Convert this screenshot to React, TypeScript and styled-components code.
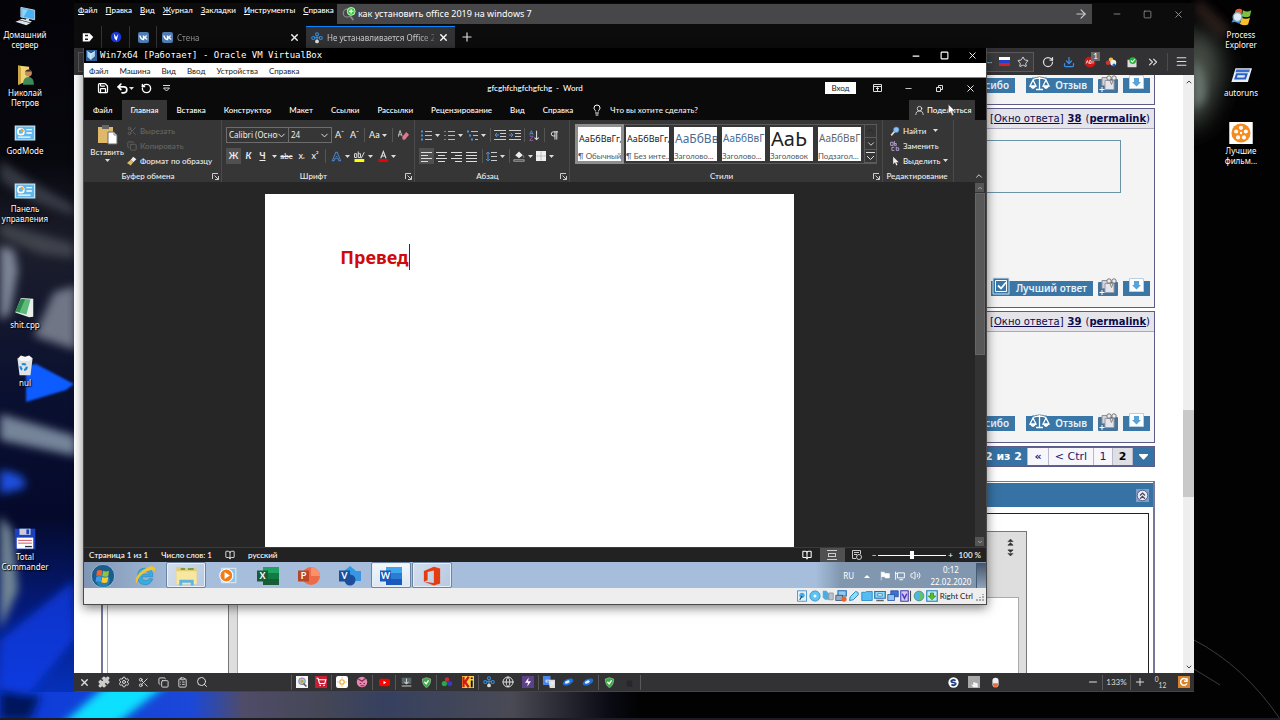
import React from "react";
import styled, { createGlobalStyle, css } from "styled-components";
import {
  Save, Undo2, RotateCcw, X, Minus, Plus, Square, Copy, Scissors, Search, Settings, Puzzle,
  ClipboardList, ChevronDown, ChevronUp, ChevronsRight, Menu, Star, RotateCw, Download, ArrowRight,
  Lightbulb, UserRound, Pilcrow, Volume2, BookOpen, Globe,
} from "lucide-react";

const compact = 'Lato, "Noto Sans", sans-serif';
const ui = '"Noto Sans", "Open Sans", sans-serif';
const verdana = '"DejaVu Sans", Verdana, sans-serif';

const GlobalStyle = createGlobalStyle`
  * { box-sizing: border-box; }
  html, body { margin: 0; }
  body { background: #000; font: 8px/10px ${compact}; color: #fff; }
  button, input, select, textarea { font: inherit; color: inherit; background: none; border: 0; margin: 0; padding: 0; }
  a { color: inherit; text-decoration: none; }
  svg { display: block; flex: none; }
`;

/* ---------- Desktop ---------- */

const Desktop = styled.div`
  position: relative;
  display: grid;
  grid-template-columns: 74px minmax(0, 1fr) 86px;
  min-height: 100vh;
  overflow: hidden;
`;
const WallpaperSvg = styled.svg`
  position: absolute;
  inset: 0;
  width: 100%;
  height: 100%;
`;
const IconColumn = styled.nav<{ $indent?: number }>`
  position: relative;
  display: grid;
  grid-auto-rows: 58px;
  grid-template-columns: 50px;
  padding-left: ${(p) => p.$indent ?? 0}px;
  padding-top: 6px;
  align-content: start;
`;
const Shortcut = styled.a<{ $row: number }>`
  grid-row: ${(p) => p.$row};
  display: flex;
  flex-direction: column;
  align-items: center;
  gap: 2px;
  text-align: center;
  font-family: ${ui};
  white-space: pre;
  text-shadow: 1px 1px 1px #000, 0 0 2px #000;
`;

/* ---------- Host browser ---------- */

const Browser = styled.main`
  position: relative;
  display: flex;
  flex-direction: column;
  min-width: 0;
  margin: 3px 0 28px;
  background: #0c0c0d;
`;
const Row = styled.div<{ $gap?: number }>`
  display: flex;
  align-items: center;
  gap: ${(p) => p.$gap ?? 0}px;
`;
const BrowserTitle = styled(Row)`
  height: 22px;
  padding-left: 4px;
`;
const HostMenu = styled.nav`
  display: flex;
  gap: 8px;
  width: 259px;
  padding-bottom: 9px;
  font-weight: 500;
  white-space: nowrap;
  a::first-letter { text-decoration: underline; }
`;
const SearchBox = styled.label`
  display: flex;
  align-items: center;
  gap: 2px;
  flex: 1;
  height: 20px;
  margin-right: 9px;
  padding: 0 4px 0 5px;
  background: #474749;
  input { flex: 1; min-width: 0; font: 9px/12px ${ui}; outline: 0; }
`;
const Controls = styled.div<{ $w: number }>`
  display: flex;
  align-items: center;
  button {
    width: ${(p) => p.$w}px;
    height: 14px;
    display: flex;
    align-items: center;
    justify-content: center;
  }
`;
const TabStrip = styled(Row)`
  height: 23px;
  align-items: stretch;
  padding-top: 1px;
`;
const PinTab = styled.button`
  display: flex;
  align-items: center;
  justify-content: center;
  width: 28px;
  border-right: 1px solid #333;
  &:nth-child(3) { width: 27px; }
`;
const Tab = styled.div<{ $active?: boolean }>`
  display: flex;
  align-items: center;
  gap: 4px;
  width: 149px;
  padding: 0 6px 0 5px;
  color: ${(p) => (p.$active ? "#c8c8c8" : "#8d8d8d")};
  font-family: ${ui};
  background: ${(p) => (p.$active ? "#323234" : "transparent")};
  border-top: 1px solid ${(p) => (p.$active ? "#0a84ff" : "transparent")};
  span {
    flex: 1;
    overflow: hidden;
    white-space: nowrap;
    mask-image: linear-gradient(90deg, #000 85%, rgba(0, 0, 0, 0.3));
  }
`;
const NavBar = styled(Row)`
  height: 27px;
  justify-content: flex-end;
  background: #323234;
  color: #ddd;
`;
const UrlBox = styled.div`
  display: flex;
  align-items: center;
  justify-content: flex-end;
  flex: 1;
  height: 20px;
  margin-left: 4px;
  padding-right: 4px;
  gap: 7px;
  border: 1px solid #59595b;
  background: #3b3b3d;
`;
const NavIcons = styled.div`
  display: flex;
  padding-left: 3px;
  button {
    position: relative;
    display: flex;
    align-items: center;
    justify-content: center;
    width: 21px;
    height: 18px;
  }
  button:last-child {
    width: 27px;
    margin-left: 4px;
    border-left: 1px solid #4c4c4e;
  }
`;
const Badge = styled.span`
  position: absolute;
  top: -1px;
  right: 0;
  width: 9px;
  line-height: 9px;
  background: #6a6a6c;
  color: #fff;
`;
const PageView = styled.div`
  display: flex;
  flex: 1;
  min-height: 0;
  background: #fff;
`;
const PageScroll = styled.div`
  display: flex;
  flex-direction: column;
  justify-content: space-between;
  align-items: center;
  position: relative;
  width: 11px;
  background: #eee;
  color: #444;
  padding: 3px 0 2px;
`;
const PageThumb = styled.div`
  position: absolute;
  top: 56%;
  left: 0;
  right: 0;
  height: 87px;
  background: #c9c9c9;
`;

/* ---------- Forum page ---------- */

const Forum = styled.div`
  display: flex;
  flex-direction: column;
  flex: 1;
  min-width: 0;
  margin: 0 28px 0 27px;
  font: 10px/12px ${verdana};
  color: #0b0b4d;
`;
const Post = styled.article<{ $h: number; $partial?: boolean }>`
  display: flex;
  flex-direction: column;
  min-height: ${(p) => p.$h}px;
  margin-bottom: 3px;
  background: #f4f4f4;
  border: 1px solid #5c5c88;
  border-top-width: ${(p) => (p.$partial ? 0 : 1)}px;
`;
const PostHead = styled.header`
  display: flex;
  justify-content: flex-end;
  gap: 4px;
  height: 20px;
  padding: 4px 4px 3px;
  background: #e4e4ea;
  border-bottom: 1px solid #a9a9b9;
  a { text-decoration: underline; }
`;
const Quote = styled.blockquote`
  height: 53px;
  margin: 11px 33px 0 40px;
  border: 1px solid #6a93a8;
`;
const PostFoot = styled.footer`
  display: flex;
  align-items: flex-end;
  justify-content: flex-end;
  gap: 5px;
  margin-top: auto;
  padding: 0 4px 11px;
`;
const ForumButton = styled.button<{ $w: number; $apart?: boolean }>`
  display: flex;
  align-items: flex-end;
  justify-content: flex-end;
  gap: 5px;
  width: ${(p) => p.$w}px;
  height: 15px;
  margin-right: ${(p) => (p.$apart ? 6 : 0)}px;
  padding: ${(p) => (p.$w > 30 ? "0 6px 0 0" : "0 6px 4px 0")};
  background: #3a76a6;
  color: #e8f2fa;
  font: 600 10px/15px ${ui};
  white-space: nowrap;
`;
const Pager = styled.nav`
  display: flex;
  justify-content: flex-end;
  height: 21px;
  padding: 1px;
  border: 1px solid #5c5c88;
  background: #3672a3;
  font-size: 11px;
  line-height: 17px;
`;
const PagerCell = styled.a<{ $w: number; $tone?: "blue" | "grey" }>`
  display: flex;
  justify-content: ${(p) => (p.$w > 100 ? "flex-end" : "center")};
  align-items: center;
  width: ${(p) => p.$w}px;
  padding-right: ${(p) => (p.$w > 100 ? 5 : 0)}px;
  border-left: 1px solid #b9b9cd;
  background: ${(p) => (p.$tone === "blue" ? "#3672a3" : p.$tone === "grey" ? "#e0e0e4" : "#f6f6fb")};
  color: ${(p) => (p.$tone === "blue" ? "#fff" : p.$tone === "grey" ? "#000" : "#1c1c6e")};
  font-weight: ${(p) => (p.$tone ? 700 : 400)};
`;
const Reply = styled.section`
  display: flex;
  flex-direction: column;
  flex: 1;
  margin-top: 14px;
  padding: 1px 0 0 1px;
  border: 1px solid #77779a;
  border-width: 1px 2px 0;
`;
const ReplyHead = styled.header`
  display: flex;
  align-items: center;
  justify-content: flex-end;
  height: 24px;
  padding: 0 4px;
  background: #3672a3;
`;
const ReplyBody = styled.div`
  display: flex;
  flex: 1;
  margin: 6px 4px 0 3px;
  padding: 17px 121px 0 120px;
  border: 1px solid #222;
  border-bottom: 0;
  border-left-color: #aab;
`;
const Editor = styled.div`
  display: flex;
  flex-direction: column;
  flex: 1;
  padding: 0 7px 0 8px;
  border: 1px solid #777;
  border-bottom: 0;
  background: #dedede;
`;
const EditorTools = styled.div`
  display: flex;
  flex-direction: column;
  align-items: flex-end;
  gap: 3px;
  height: 65px;
  padding: 7px 5px;
`;
const EditorText = styled.textarea`
  flex: 1;
  resize: none;
  background: #fff;
  border: 1px solid #aaa;
  border-bottom: 0;
`;
const BottomBar = styled(Row)`
  height: 19px;
  background: #323234;
  color: #ddd;
  border-bottom: 1px solid #444;
`;
const BarGroup = styled.div<{ $w: number; $line?: boolean }>`
  display: flex;
  align-items: center;
  justify-content: space-around;
  width: ${(p) => p.$w}px;
  height: 15px;
  border-left: 1px solid ${(p) => (p.$line ? "#58585a" : "transparent")};
  button { padding: 0 1px; }
`;
const Spacer = styled.div`
  flex: 1;
`;

/* ---------- Virtual machine window ---------- */

const VmWindow = styled.section`
  position: absolute;
  inset: 48px 293px 115px 83px;
  display: flex;
  flex-direction: column;
  overflow: hidden;
  background: #0a0a0a;
  border: 1px solid #4a4a4a;
  border-top: 0;
`;
const VmShadow = styled.div`
  position: absolute;
  inset: 48px 293px 115px 83px;
  box-shadow: 0 3px 10px rgba(0, 0, 0, 0.5);
`;
const VmTitle = styled(Row)`
  height: 15px;
  padding-left: 2px;
  background: #000;
  h1 {
    flex: 1;
    margin: 0 0 0 3px;
    font: 9px/15px "DejaVu Sans Mono", monospace;
  }
`;
const VmMenu = styled.nav`
  display: flex;
  gap: 11px;
  height: 15px;
  padding: 3px 5px 0;
  background: #fff;
  border-bottom: 1px solid #888;
  color: #222;
`;
const WordTitle = styled.div`
  display: grid;
  grid-template-columns: 1fr auto 1fr;
  align-items: center;
  height: 22px;
  padding-bottom: 2px;
  h2 { margin: 0; font-size: 8px; font-weight: 500; }
`;
const QuickAccess = styled(Row)`
  padding-left: 13px;
  gap: 7px;
`;
const SignIn = styled.button`
  width: 31px;
  height: 12px;
  margin-right: 6px;
  background: #fff;
  color: #222;
`;
const RibbonTabs = styled.div`
  display: flex;
  align-items: stretch;
  height: 20px;
  padding-right: 11px;
  font-weight: 500;
  white-space: nowrap;
`;
const RibbonTab = styled.button<{ $active?: boolean }>`
  padding: 0 9px;
  background: ${(p) => (p.$active ? "#363636" : "transparent")};
`;
const TellMe = styled.label`
  display: flex;
  align-items: center;
  flex: 1;
  gap: 7px;
  padding-left: 9px;
  input { width: 110px; font-weight: 500; }
  input::placeholder { color: #f2f2f2; opacity: 1; }
`;
const Share = styled.button`
  position: relative;
  display: flex;
  align-items: center;
  gap: 2px;
  width: 66px;
  padding-left: 5px;
  background: #363636;
  font-weight: 500;
`;
const Pointer = styled.svg`
  position: absolute;
  left: 39px;
  top: 4px;
`;
const Ribbon = styled.div`
  display: flex;
  flex: none;
  height: 62px;
  background: #363636;
  color: #eee;
  font-weight: 500;
`;
const Group = styled.section<{ $w?: number }>`
  display: flex;
  flex-direction: column;
  flex: ${(p) => (p.$w ? `none` : `1`)};
  width: ${(p) => (p.$w ? `${p.$w}px` : `auto`)};
  min-width: 0;
  border-right: 1px solid #4a4a4a;
  &:last-child { border: 0; }
`;
const GroupBody = styled.div<{ $pad: number }>`
  display: flex;
  height: 50px;
  padding: 3px 0 0 ${(p) => p.$pad}px;
`;
const GroupLabel = styled.footer`
  display: flex;
  align-items: center;
  height: 12px;
  padding-right: 2px;
  h3 { flex: 1; margin: 0; font-size: 8px; font-weight: 500; text-align: center; }
`;
const Paste = styled.button`
  display: flex;
  flex-direction: column;
  align-items: center;
  width: 34px;
  gap: 2px;
`;
const Stack = styled.div<{ $left?: number }>`
  display: flex;
  flex-direction: column;
  margin-left: ${(p) => p.$left ?? 0}px;
`;
const Command = styled.button`
  display: flex;
  align-items: center;
  gap: 3px;
  height: 15px;
  white-space: nowrap;
  &:disabled { color: #666; }
`;
const ToolRows = styled.div`
  display: flex;
  flex-direction: column;
  gap: 5px;
  padding-top: 4px;
`;
const ToolRow = styled.div`
  display: flex;
  align-items: center;
  height: 16px;
`;
const Tool = styled.button<{ $w?: number; $on?: boolean }>`
  display: flex;
  align-items: center;
  justify-content: center;
  width: ${(p) => p.$w ?? 15}px;
  height: 16px;
  font-size: 9px;
  background: ${(p) => (p.$on ? "#505050" : "none")};
`;
const SmallGlyph = styled.span`
  font-size: 8px;
`;
const Divider = styled.i<{ $w: number }>`
  width: ${(p) => p.$w}px;
  height: 14px;
  background: linear-gradient(#555, #555) center / 1px 100% no-repeat;
`;
const Picker = styled.label<{ $w: number }>`
  position: relative;
  display: block;
  width: ${(p) => p.$w}px;
  height: 16px;
  border: 1px solid #6c6c6c;
  font-family: ${ui};
  font-weight: 400;
  & + & { margin-left: -1px; }
  select {
    width: ${(p) => p.$w - 12}px;
    height: 14px;
    padding-left: 2px;
    appearance: none;
    overflow: hidden;
  }
  option { color: #000; }
  svg { position: absolute; right: 1px; top: 2px; pointer-events: none; }
`;
const Gallery = styled.div`
  display: flex;
  gap: 1px;
  height: 40px;
  margin-top: 1px;
  border: 1px solid #5a5a5a;
`;
const StyleCard = styled.button<{ $on?: boolean; $size: number; $tint: string }>`
  display: flex;
  flex-direction: column;
  justify-content: space-between;
  width: 47px;
  height: 38px;
  padding: 0;
  border: 2px solid ${(p) => (p.$on ? "#8e8e8e" : "#363636")};
  outline: ${(p) => (p.$on ? "1px solid #8e8e8e" : "0")};
  background: #fff;
  color: #555;
  overflow: hidden;
  white-space: nowrap;
  text-align: left;
  font-weight: 400;
  b {
    flex: 1;
    display: block;
    padding-left: 1px;
    font: 400 ${(p) => p.$size}px/23px ${ui};
    color: ${(p) => p.$tint};
  }
`;
const GalleryScroll = styled.div`
  display: flex;
  flex-direction: column;
  width: 12px;
  border-left: 1px solid #5a5a5a;
  button {
    flex: 1;
    display: flex;
    align-items: center;
    justify-content: center;
    border-bottom: 1px solid #5a5a5a;
  }
  button:disabled { color: #222; }
`;
const DocArea = styled.div`
  display: flex;
  flex: 1;
  min-height: 0;
  background: #262626;
`;
const Canvas = styled.div`
  display: flex;
  flex: 1;
  justify-content: center;
  padding: 12px 0 0;
`;
const Paper = styled.article`
  width: 59.3%;
  padding: 50px 75px;
  background: #fff;
  color: #d00a0a;
  font: 700 18px/26px ${ui};
  p { display: inline-block; margin: 0; border-right: 1px solid #333; }
`;
const DocScroll = styled.div`
  display: flex;
  flex-direction: column;
  justify-content: space-between;
  width: 11px;
  background: #333;
  button {
    display: flex;
    align-items: center;
    justify-content: center;
    width: 9px;
    height: 9px;
    margin: 1px 0;
    background: #555;
    color: #aaa;
  }
  i { width: 10px; height: 162px; margin-bottom: auto; background: #585858; border: 1px solid #666; }
`;
const WordStatus = styled(Row)`
  height: 15px;
  padding: 0 5px;
  background: #222;
  font-weight: 500;
  border-top: 1px solid #3a3a3a;
`;
const ViewButton = styled.button<{ $on?: boolean }>`
  display: flex;
  align-items: center;
  justify-content: center;
  width: 25px;
  height: 14px;
  background: ${(p) => (p.$on ? "#505050" : "none")};
`;
const ZoomLevel = styled.output`
  width: 28px;
  text-align: right;
`;
const Zoom = styled.input`
  width: 68px;
  height: 9px;
  margin: 0 2px;
  appearance: none;
  background: linear-gradient(#fff, #fff) center / 100% 1px no-repeat;
  &::-webkit-slider-thumb { appearance: none; width: 4px; height: 8px; background: #fff; }
`;
const Taskbar = styled.div`
  display: flex;
  flex: none;
  height: 26px;
  background: linear-gradient(90deg, #7f96b4 0, #9fb6d4 80px, #a6bddb 120px, #a6bddb calc(100% - 170px), #8197b0 calc(100% - 145px));
`;
const TaskButton = styled.button<{ $state?: "open" | "front" }>`
  display: flex;
  align-items: center;
  justify-content: center;
  width: 40px;
  margin-right: 1px;
  padding-top: 1px;
  &:first-child { width: 38px; margin-right: 3px; }
  ${(p) => p.$state && css`
    border: 1px solid #6d84a3;
    border-radius: 2px;
    box-shadow: inset 0 0 0 1px #e6effa;
    background: ${p.$state === "front" ? "linear-gradient(#f4f8fc, #dce6f2)" : "linear-gradient(120deg, #d4dfed, #b7c9e1)"};
  `}
`;
const Tray = styled.div`
  display: flex;
  align-items: center;
  gap: 5px;
  margin-left: auto;
  padding-top: 1px;
  font-family: ${ui};
  time { width: 50px; line-height: 12px; text-align: center; }
`;
const ShowDesktop = styled.button`
  width: 10px;
  height: 25px;
  margin-left: -5px;
  border-left: 1px solid #445a75;
  background: linear-gradient(#45556a, #8fa3bb);
`;
const VmStatus = styled(Row)`
  flex: none;
  height: 16px;
  justify-content: flex-end;
  gap: 1px;
  background: #eee;
  color: #222;
  span { padding-left: 1px; white-space: nowrap; }
`;

/* ---------- Drawings ---------- */

type Art = { s?: number; children?: React.ReactNode; box?: string; h?: number };
const Draw = ({ s = 12, h, box = "0 0 16 16", children }: Art) => (
  <svg width={s} height={h ?? s} viewBox={box} fill="none" aria-hidden="true">{children}</svg>
);
const Caret = () => (
  <Draw s={5} h={3} box="0 0 5 3"><path d="M0 0h5L2.500 3z" fill="#ddd" /></Draw>
);
const Launcher = () => (
  <Draw s={7} box="0 0 7 7"><path d="M.5 6V.5H6M2.500 2.500l4 4M6.500 3v3.500H3" stroke="#ccc" /></Draw>
);

const Wallpaper = () => (
  <WallpaperSvg viewBox="0 0 1280 720" preserveAspectRatio="none" aria-hidden="true">
    <defs>
      <filter id="edge" x="-50%" y="-50%" width="200%" height="200%"><feGaussianBlur stdDeviation="1" /></filter>
      <filter id="soft" x="-50%" y="-50%" width="200%" height="200%"><feGaussianBlur stdDeviation="4" /></filter>
      <filter id="wide" x="-50%" y="-50%" width="200%" height="200%"><feGaussianBlur stdDeviation="12" /></filter>
      <linearGradient id="base" x1="0" x2="0" y1="0" y2="1">
        <stop offset="0" stopColor="#030308" /><stop offset=".22" stopColor="#07070e" />
        <stop offset=".34" stopColor="#1c1e2b" /><stop offset=".55" stopColor="#0a1030" />
        <stop offset=".72" stopColor="#050a2c" /><stop offset=".84" stopColor="#041a78" /><stop offset="1" stopColor="#0638d0" />
      </linearGradient>
      <linearGradient id="floor" x1="0" x2="1">
        <stop offset="0" stopColor="#0a3ad8" /><stop offset=".3" stopColor="#1b48d8" />
        <stop offset=".38" stopColor="#4f4c68" /><stop offset=".5" stopColor="#454756" />
        <stop offset=".6" stopColor="#36405f" /><stop offset=".8" stopColor="#494a54" />
        <stop offset=".95" stopColor="#0a0b14" /><stop offset="1" stopColor="#020203" />
      </linearGradient>
    </defs>
    <rect width="1280" height="720" fill="#020203" />
    <rect width="76" height="720" fill="url(#base)" />
    <g filter="url(#soft)">
      <path d="M0 160l30 20 44 26v10L30 200 0 180z" fill="#50555f" opacity=".6" />
      <path d="M0 222l74 22v14L40 254 0 236z" fill="#555a60" opacity=".6" />
      <path d="M0 246l14 4 4 20-8 44-10 6z" fill="#7c8496" />
      <path d="M54 292l22-6v64l-42-14z" fill="#6f7686" />
      <path d="M0 414l76 22v20L0 440z" fill="#76849a" />
      <path d="M0 470q30 4 24 18l-24 6z" fill="#1c50e0" />
      <path d="M0 516l12 14 6 60-18 40z" fill="#6f8494" />
    </g>
    <path d="M26 366l10-2 38 20-8 6-40 12z" fill="#0b5cff" filter="url(#edge)" />
    <rect x="0" y="692" width="640" height="28" fill="url(#floor)" />
    <g filter="url(#soft)">
      <path d="M60 726L110 682h60l-56 44z" fill="#10e0ff" />
      <path d="M0 640l74-60v60L10 716H0z" fill="#0a40f0" opacity=".7" />
      <path d="M0 690l40 6-10 24H0z" fill="#04155c" />
    </g>
    <path d="M1180 30l34 6 8 40-18 44-24 10z" fill="#4c524c" filter="url(#wide)" />
    <path d="M1194 60q14 14 10 40l-10 10z" fill="#6d7a74" filter="url(#soft)" />
    <path d="M1196 4l30 30" stroke="#3c2c20" strokeWidth="14" opacity=".6" filter="url(#soft)" />
    <path d="M1194 640q50 26 86 79M1194 669l26 16" stroke="#4a4a4c" fill="none" opacity=".8" />
    <path d="M0 719h1280" stroke="#1c1c24" strokeWidth="2" />
  </WallpaperSvg>
);

const PanelArt = () => (
  <Draw s={22}><path d="M1 3h14v10H1z" fill="#5fb7ea" stroke="#bfe4f8" /><circle cx="5" cy="7" r="2.200" stroke="#fff" strokeWidth="1.200" /><path d="M5 7V4.800A2.200 2.200 0 0 1 7.200 7z" fill="#f5a623" /><path d="M9 5.500h4M9 8h4M3 11h9" stroke="#fff" /></Draw>
);
const desktopLeft = [
  { row: 1, label: "Домашний\nсервер", art: <Draw s={22}><path d="M5 1l10 2v7L5 8z" fill="#49b2f2" stroke="#cfe6f4" strokeWidth=".6" /><path d="M6 2l4 .8L7 8l-1-.3z" fill="#8fd4fa" /><path d="M9 9l2 .5-.4 2-2-.5zM1 11.500l3-1.200 8 2-3 1.700zM4 10l2-.7 7 1.700-1 1z" fill="#dce3e8" /></Draw> },
  { row: 2, label: "Николай\nПетров", art: <Draw s={22}><path d="M3 1l8 1v10l-8 3z" fill="#f0d578" /><path d="M3 1l2 1v12.500L3 15z" fill="#c9a43f" /><circle cx="10.500" cy="6.500" r="2.500" fill="#c68b60" /><path d="M8 5.500q2.500-3 5 0z" fill="#3a2a1c" /><path d="M6.500 15q0-5.500 4-5.500t4 5.500z" fill="#3f8a5a" /></Draw> },
  { row: 3, label: "GodMode", art: <PanelArt /> },
  { row: 4, label: "Панель\nуправления", art: <PanelArt /> },
  { row: 6, label: "shit.cpp", art: <Draw s={22}><path d="M5 1.500l9 .5v13l-3 .5L1 12z" fill="#e8efe8" /><path d="M5 2l7 .5-3 11-8-2z" fill="#5cba7a" /><path d="M5 2l3 .3-4 9.500-3-.8z" fill="#2f8a50" /></Draw> },
  { row: 7, label: "nul", art: <Draw s={22}><path d="M2.500 3h11L12 15.500H4z" fill="#dfe3e6" /><path d="M3 3l2-2 3 1 3-1 2.500 2L11 5H5z" fill="#f6f6f6" /><circle cx="7" cy="9.500" r="2.200" stroke="#1f86d6" strokeWidth="1.500" strokeDasharray="3 1.400" /></Draw> },
  { row: 10, label: "Total\nCommander", art: <Draw s={22}><path d="M.5.5h15v15H.5z" fill="#1c3fc0" /><path d="M4 .5h8V5H4z" fill="#c9ced6" /><path d="M9 1h2v3.500H9z" fill="#1c3fc0" /><path d="M2 7h12v8H2z" fill="#fff" /><path d="M3 9h10M3 11h10" stroke="#d05060" strokeWidth=".7" /><path d="M8 13.500h5" stroke="#333" /></Draw> },
];
const desktopRight = [
  { row: 1, label: "Process\nExplorer", art: <Draw s={22}><path d="M4 3q3-2 5 0L8 7Q5 6 3 7z" fill="#ee5a2a" /><path d="M9.500 3q3 2 6 0l-1 4.500q-3 1.500-6-.3z" fill="#7cc142" /><path d="M3 8q3-1.500 5 0l-1 5q-3-2-6-1z" fill="#3a8be0" /><path d="M8.500 8.500q3 1.500 6 0l-1.300 5q-3 1.200-6-.5z" fill="#f7c02c" /><circle cx="5.500" cy="8" r="3.200" fill="#d8ecfa" stroke="#8ab" /></Draw> },
  { row: 2, label: "autoruns", art: <Draw s={22}><path d="M4 3h12l-3 10H1z" fill="#e9eff7" /><path d="M4.500 4h10l-.6 2H4z" fill="#3a6fd0" /><path d="M5 7.500h7l-1 3H4z" stroke="#2a5fc4" strokeWidth="1.500" /></Draw> },
  { row: 3, label: "Лучшие\nфильм...", art: <Draw s={24} h={22} box="0 0 16 15"><path d="M0 0h16v15H0z" fill="#fff" /><circle cx="8" cy="7.500" r="6.500" fill="#f58a1f" /><g fill="#fff"><circle cx="8" cy="4" r="1.400" /><circle cx="11.300" cy="6.500" r="1.400" /><circle cx="10" cy="10.500" r="1.400" /><circle cx="6" cy="10.500" r="1.400" /><circle cx="4.700" cy="6.500" r="1.400" /><circle cx="8" cy="7.500" r=".8" /></g></Draw> },
];

const VkArt = () => <Draw s={11}><rect width="16" height="16" rx="3" fill="#4f7db3" /><path d="M2.500 5q2 6 5.500 6V5M8 8q4-1 4.500-3M8 8q4 .5 5 3" stroke="#fff" strokeWidth="2" /></Draw>;
const Molecule = () => <Draw s={12}><path d="M8 8L4 7M8 8l4-1M8 8V4M8 9v3" stroke="#2f8fe0" strokeWidth="1.500" /><circle cx="3" cy="8" r="2" stroke="#2f8fe0" strokeWidth="1.500" /><circle cx="13" cy="8" r="2" stroke="#2f8fe0" strokeWidth="1.500" /><circle cx="8" cy="3" r="2" stroke="#2f8fe0" strokeWidth="1.500" /><circle cx="8" cy="12.500" r="2.500" fill="#ddd" /></Draw>;
const Flag = () => <Draw s={11} h={9} box="0 0 11 9"><path d="M0 0h11v3H0z" fill="#fff" /><path d="M0 3h11v3H0z" fill="#2340c8" /><path d="M0 6h11v3H0z" fill="#d82020" /></Draw>;
const Shield = () => <Draw s={11}><path d="M8 1l6 2q0 9-6 12.500Q2 12 2 3z" fill="#3aa845" stroke="#9c9" /><path d="M5 7l2.500 3L11 5" stroke="#fff" strokeWidth="2" /></Draw>;
const Orb = () => <Draw s={12}><ellipse cx="8" cy="8" rx="7.500" ry="4" transform="rotate(-25 8 8)" fill="#1f6fd8" /><ellipse cx="7" cy="8" rx="3.500" ry="2" transform="rotate(-25 7 8)" fill="#e6f2ff" /></Draw>;

const Scales = () => <Draw s={21} h={17} box="0 0 21 17"><path d="M10.500 1v12M4 3.500q6.500-3 13 0M7 13.500h7M4 4L1 10h6zM17 4l-3 6h6z" stroke="#3a76a6" strokeWidth="3" /><path d="M10.500 1v12M4 3.500q6.500-3 13 0M7 13.500h7M4 4L1 10h6zM17 4l-3 6h6z" stroke="#fff" strokeWidth="1.300" /><path d="M1 10h6q-1 3-3 3t-3-3zM14 10h6q-1 3-3 3t-3-3z" fill="#fff" /></Draw>;
const CheckArt = () => <Draw s={19} h={19} box="0 0 19 19"><path d="M1 1h16v16H1z" fill="#3a76a6" stroke="#cfe2f1" /><path d="M3.500 3.500h11v11h-11z" stroke="#fff" /><path d="M6 8.500l3 3 5-6" stroke="#fff" strokeWidth="1.800" /></Draw>;
const MultiQuote = () => <Draw s={20} h={18} box="0 0 20 18"><rect y="4" width="20" height="14" rx="1" fill="#44749c" /><path d="M4 2.500h8v8H4z" fill="#d4d4d8" stroke="#8a94a0" /><path d="M7 5.500h9v9H7z" fill="#e6e6ea" stroke="#99a" /><circle cx="11" cy="3" r="2.200" stroke="#777" fill="#eee" /><circle cx="16" cy="3" r="2.200" stroke="#777" fill="#eee" /><path d="M12 5.500l1.500 4 1.500-4" stroke="#888" /><path d="M1.500 14.500h5M4 12v5" stroke="#fff" /></Draw>;
const DownBox = () => <Draw s={15} h={14} box="0 0 15 14"><path d="M.5.5h14v13H.5z" fill="#fff" stroke="#b8d0e2" /><path d="M5 3h5v4h2l-4.500 4.500L3 7h2z" fill="#5aa3d8" /></Draw>;

const PostButtons = ({ best }: { best?: boolean }) => (
  <PostFoot>
    {best ? (
      <ForumButton $w={102}><CheckArt />Лучший ответ</ForumButton>
    ) : (
      <>
        <ForumButton $w={80} $apart>Спасибо</ForumButton>
        <ForumButton $w={67}><Scales />Отзыв</ForumButton>
      </>
    )}
    <button aria-label="Цитировать"><MultiQuote /></button>
    <ForumButton $w={27} aria-label="Вниз"><DownBox /></ForumButton>
  </PostFoot>
);
const PostHeader = ({ n }: { n: number }) => (
  <PostHead>
    <span>[Профиль]</span>
    <span>[<a href="#reply">Окно ответа</a>]</span>
    <b><a href="#post">{n}</a></b>
    <span>(<b><a href="#link">permalink</a></b>)</span>
  </PostHead>
);

const ListArt = ({ kind }: { kind: number }) => (
  <Draw s={11} box="0 0 11 11">
    <path d={kind === 2 ? "M4 1.500h7M6 5.500h5M8 9.500h3" : "M4 1.500h7M4 5.500h7M4 9.500h7"} stroke="#bbb" />
    <path d={kind === 2 ? "M0 1.500h2M2 5.500h2M4 9.500h2" : "M0 1.500h2M0 5.500h2M0 9.500h2"} stroke="#4a90d9" strokeWidth={kind === 1 ? 1 : 2} />
  </Draw>
);
const AlignArt = ({ d }: { d: string }) => <Draw s={11} box="0 0 11 11"><path d={d} stroke="#ddd" /></Draw>;
const IndentArt = ({ out }: { out?: boolean }) => (
  <Draw s={12} box="0 0 12 12"><path d="M0 1.500h12M6 4.500h6M6 7.500h6M0 10.500h12" stroke="#ccc" /><path d={out ? "M5 6H1M3 4L1 6l2 2" : "M0 6h4M2 4l2 2-2 2"} stroke="#4a90d9" /></Draw>
);

const Office = ({ letter, tone }: { letter: string; tone: "x" | "p" | "v" | "w" }) => {
  const c = {
    x: ["#21a366", "#107c41", "#185c37"], p: ["#ed6c47", "#ff8f6b", "#c43e1c"],
    v: ["#2e9be6", "#1f6fc4", "#1b4f9c"], w: ["#41a5ee", "#2b7cd3", "#185abd"],
  }[tone];
  return (
    <Draw s={22} h={20} box="0 0 22 20">
      {tone === "p" ? <><circle cx="13" cy="10" r="9" fill={c[0]} /><path d="M13 1a9 9 0 0 1 9 9h-9z" fill={c[1]} /></>
        : tone === "v" ? <><path d="M11 0l6 5-6 6-6-6z" fill={c[0]} /><path d="M12 5h10v10H12z" fill="#3a96e0" /><circle cx="11" cy="14" r="5.500" fill={c[2]} /></>
        : <><path d="M6 1h16v6H6z" fill={c[0]} /><path d="M6 7h16v6H6z" fill={c[1]} /><path d="M6 13h16v6H6z" fill={c[2]} /></>}
      <path d="M0 4.500h11v11H0z" fill={tone === "p" ? "#b7472a" : c[2]} />
      <text x="5.500" y="13" textAnchor="middle" fontSize="9" fontWeight="700" fill="#fff">{letter}</text>
    </Draw>
  );
};
const tasks: { name: string; state?: "open" | "front"; art: React.ReactNode }[] = [
  { name: "Пуск", art: <Draw s={24}><circle cx="8" cy="8" r="7.800" fill="#1d5c8c" stroke="#9fc3de" strokeWidth=".6" /><circle cx="8" cy="11" r="4.500" fill="#2f9bc8" opacity=".6" /><path d="M4 4.500q1.500-1 3.500 0L7 8q-2-.8-3.500 0z" fill="#f0622e" /><path d="M8 4.500q2 1 4 0L11.500 8q-2 1-4 0z" fill="#8cc63f" /><path d="M3.500 8.500q1.500-.8 3.500 0l-.5 3.500q-1.500-1-3.500 0z" fill="#3f9be8" /><path d="M7.500 8.700q1.700 1 4 0l-.6 3.500q-2 1-4 0z" fill="#fccb2f" /></Draw> },
  { name: "Internet Explorer", art: <Draw s={21}><path d="M13.500 9H5q.5 3 3 3 2 0 3-1.500h2.500Q12 15 8 15q-6 0-6-6.500T8 2.500q6 0 5.500 6.500zM5 7h6Q10.500 5 8 5T5 7z" fill="#35aee2" stroke="#1a7fba" strokeWidth=".4" /><path d="M1 14Q-1 9 6 4t9-2q1 1-.5 3.500Q15 2.500 9 5T1 14z" fill="#f2c52e" /></Draw> },
  { name: "Проводник", state: "open", art: <Draw s={23}><path d="M1 2h5l1 1h8v11H1z" fill="#e8cc70" /><path d="M1 5h14v9H1z" fill="#f8e7a0" /><path d="M3 15v-4h10v4h-2v-2H5v2z" fill="#5fb4e4" /><path d="M4 3.500h3M9 3.500h4" stroke="#4a8f4a" /></Draw> },
  { name: "Проигрыватель", art: <Draw s={19}><path d="M3 2h12v12H3z" fill="#8ec5e8" stroke="#cfe6f5" /><circle cx="7" cy="8" r="5.500" fill="#ee7d1c" stroke="#fff" /><path d="M5.500 5v6l4.500-3z" fill="#fff" /></Draw> },
  { name: "Excel", art: <Office letter="X" tone="x" /> },
  { name: "PowerPoint", art: <Office letter="P" tone="p" /> },
  { name: "Visio", art: <Office letter="V" tone="v" /> },
  { name: "Word", state: "front", art: <Office letter="W" tone="w" /> },
  { name: "Office", state: "open", art: <Draw s={20}><path d="M1.500 4l8-3.500 5 1.500v12l-5 1.500-8-3 8 1V3.500L4.500 4.700v6.600l-3 1.200z" fill="#e43d12" /></Draw> },
];

const styleCards = [
  { sample: "АаБбВвГг,", label: "¶ Обычный", size: 9, tint: "#222", on: true },
  { sample: "АаБбВвГг,", label: "¶ Без инте...", size: 9, tint: "#222" },
  { sample: "АаБбВв", label: "Заголово...", size: 12, tint: "#4a6b94" },
  { sample: "АаБбВвГ", label: "Заголово...", size: 10, tint: "#4a6b94" },
  { sample: "АаЬ", label: "Заголовок", size: 20, tint: "#222" },
  { sample: "АаБбВвГ", label: "Подзагол...", size: 10, tint: "#666" },
];

const vmIcons = [
  <><path d="M2 1h12v14H2z" fill="#e3f1fa" stroke="#2a7fc0" /><circle cx="8" cy="7" r="3.500" fill="#4aa8e0" /><path d="M8 8l-3 5" stroke="#246" strokeWidth="1.500" /></>,
  <><circle cx="8" cy="8" r="6.800" fill="#5cc4f0" stroke="#2389c4" /><circle cx="8" cy="8" r="2" fill="#fff" /></>,
  <><path d="M1 1h5l3 4v8H4L1 10z" fill="#4aaee4" /><path d="M9 4h6v9H9z" fill="#b9c4cc" stroke="#889" /></>,
  <><path d="M4 1h11v7H4z" fill="#8fcdf2" stroke="#2567b0" strokeWidth="1.500" /><path d="M1 7h9v7H1z" fill="#9ab" stroke="#346" /><circle cx="12" cy="12" r="3.500" fill="#e8642c" /></>,
  <path d="M2 14l1-5 7-7q4 0 4 4l-7 7z" fill="#8fdcf8" stroke="#2c86b8" strokeWidth="1.300" />,
  <path d="M1 3h5l1-1h8v12H1z" fill="#56bdf2" stroke="#1d7ec0" />,
  <><path d="M1 2h14v9H1z" fill="#8adcf8" stroke="#2a6fae" strokeWidth="1.600" /><path d="M5 5h6v3H5z" fill="#fff" stroke="#2a6fae" /><path d="M3 14h10" stroke="#666" strokeWidth="2" /></>,
  <><path d="M5 1h10v8H5z" fill="#3d6fd8" stroke="#234a9c" /><path d="M1 6h9v8H1z" fill="#8fc4ee" stroke="#234a9c" /></>,
  <><path d="M1 1h10v14H1z" fill="#cfc8f2" stroke="#3b3fae" strokeWidth="1.400" /><path d="M3 5l3 6 3-6" stroke="#5a32b8" strokeWidth="2" /><path d="M14 1v14" stroke="#444" strokeWidth="1.500" /></>,
  <><circle cx="8" cy="8" r="6.500" fill="#4fb6e8" stroke="#3c8c50" /><path d="M9 2l5 6-6 6z" fill="#6cc644" /></>,
  <><path d="M1 1h14v14H1z" fill="#bfeaf9" stroke="#1f7cb4" strokeWidth="1.500" /><path d="M6 4h4v4h3l-5 5-5-5h3z" fill="#5ac030" stroke="#2e8a16" /></>,
];

const barIcons: { w: number; icons: [string, React.ReactNode][] }[] = [
  { w: 40, icons: [["Поиск по сайту", <Draw s={12}><path d="M0 0h16v16H0z" fill="#f4f4f4" /><circle cx="8" cy="7" r="4.500" fill="#9cc8ea" stroke="#777" /><circle cx="8" cy="7" r="2" fill="#e89030" /><path d="M10 10l4 4" stroke="#555" strokeWidth="2" /></Draw>], ["Корзина", <Draw s={12}><path d="M0 0h16v16H0z" fill="#c81e34" /><path d="M2 3h2l2 7h7l1.500-5H5M6 12.500h2M11 12.500h2" stroke="#fff" strokeWidth="1.500" /></Draw>]] },
  { w: 41, icons: [["Погода", <Draw s={12}><rect width="16" height="16" rx="3" fill="#fff" /><circle cx="8" cy="8" r="3" stroke="#eaa92c" strokeWidth="1.500" /><path d="M8 1.500v2M8 12.500v2M1.500 8h2M12.500 8h2" stroke="#eaa92c" /></Draw>], ["Аватар", <Draw s={12}><circle cx="8" cy="8" r="7" fill="#e888b0" /><path d="M3 4l5 3 5-4M5 10h2M10 10h2M6 13h5" stroke="#7c2a55" strokeWidth="1.500" /></Draw>]] },
  { w: 23, icons: [["YouTube", <Draw s={11}><rect y="2.500" width="16" height="11" rx="3" fill="#f00" /><path d="M6.500 5.500v5l4-2.500z" fill="#fff" /></Draw>]] },
  { w: 41, icons: [["Загрузки", <Draw s={11}><path d="M1 1h14v9H1z" fill="#566" /><path d="M8 2v8M5 7l3 3 3-3M1 13h14" stroke="#ccc" strokeWidth="1.500" /></Draw>], ["Защита", <Shield />]] },
  { w: 42, icons: [["Цвета", <Draw s={12}><circle cx="8" cy="4.500" r="3" fill="#d02838" /><circle cx="4.500" cy="10" r="3.500" fill="#28a848" /><circle cx="11.500" cy="10" r="3.500" fill="#3838c8" /></Draw>], ["Ki", <Draw s={12}><path d="M0 0h16v16H0z" fill="#f6d040" /><path d="M2 1v14M9 1L4 8l5 7" stroke="#d01818" strokeWidth="3" /><path d="M13 6v9M13 2v2" stroke="#111" strokeWidth="2.500" /></Draw>]] },
  { w: 60, icons: [["Связи", <Molecule />], ["Сеть", <Globe size={12} />], ["Молния", <Draw s={12}><path d="M0 0h16v16H0z" fill="#5c4088" /><path d="M9 2L4 9h4l-1 5 5-7H8z" fill="#fff" /></Draw>]] },
  { w: 60, icons: [["Переводчик", <Draw s={12}><path d="M0 0h10v12H0z" fill="#4a86e8" /><path d="M7 5h9v11H9z" fill="#ddd" /><path d="M7 5.500H4V8h2.500M10 9h4l-3 4" stroke="#fff" /></Draw>], ["Орбита", <Orb />], ["Орбита 2", <Orb />]] },
  { w: 42, icons: [["Щит", <Shield />], ["Стоп", <Draw s={11}><path d="M4 5h8v9H4z" fill="#26262c" /></Draw>]] },
  { w: 10, icons: [] },
];

export default function App() {
  return (
    <Desktop>
      <GlobalStyle />
      <Wallpaper />
      <IconColumn>
        {desktopLeft.map((i) => <Shortcut key={i.label} href="#open" $row={i.row}>{i.art}{i.label}</Shortcut>)}
      </IconColumn>

      <Browser>
        <BrowserTitle>
          <HostMenu>
            {["Файл", "Правка", "Вид", "Журнал", "Закладки", "Инструменты", "Справка"].map((m) => <a key={m} href="#menu">{m}</a>)}
          </HostMenu>
          <SearchBox>
            <Draw s={14}><circle cx="6" cy="7" r="4.500" stroke="#888" strokeWidth="1.500" /><path d="M9 10l4 5" stroke="#888" strokeWidth="2" /><circle cx="10.500" cy="5" r="4.500" fill="#3fc43f" stroke="#cfc" /><path d="M10.500 2.500v5M8 5h5" stroke="#fff" strokeWidth="1.500" /></Draw>
            <input aria-label="Поиск" defaultValue="как установить office 2019 на windows 7" />
            <ArrowRight size={14} strokeWidth={2} color="#ccc" />
          </SearchBox>
          <Controls $w={31}>
            <button aria-label="Свернуть"><Minus size={10} color="#999" /></button>
            <button aria-label="Развернуть"><Square size={9} color="#999" /></button>
            <button aria-label="Закрыть"><X size={11} color="#999" /></button>
          </Controls>
        </BrowserTitle>
        <TabStrip>
          <PinTab aria-label="Вкладка 1"><Draw s={12}><path d="M1 3h9l5 5-5 6H1z" fill="#fff" /><path d="M4 6h4M4 11h4" stroke="#222" strokeWidth="2" /></Draw></PinTab>
          <PinTab aria-label="Вкладка 2"><Draw s={12}><circle cx="8" cy="8" r="7" fill="#1838d8" /><path d="M5 3l3 5 3-4-2 9-3-3z" fill="#fff" /></Draw></PinTab>
          <PinTab aria-label="Вкладка 3"><VkArt /></PinTab>
          <Tab><VkArt /><span>Стена</span><X size={11} color="#eee" strokeWidth={3} /></Tab>
          <Tab $active><Molecule /><span>Не устанавливается Office 20</span><X size={11} color="#fff" strokeWidth={3} /></Tab>
          <Controls $w={24}><button aria-label="Новая вкладка"><Plus size={14} color="#ddd" /></button></Controls>
        </TabStrip>
        <NavBar>
          <UrlBox>··· <Flag /><Star size={12} /></UrlBox>
          <NavIcons>
            <button aria-label="Обновить"><RotateCw size={12} strokeWidth={2.500} /></button>
            <button aria-label="Загрузки"><Download size={12} color="#3a8ee8" strokeWidth={2.500} /></button>
            <button aria-label="Блокировщик"><Draw s={12}><path d="M5 1h6l4 4v6l-4 4H5l-4-4V5z" fill="#c81818" /><path d="M3 10l1.500-4L6 10M7.500 6v4h2V6zM12 6v4" stroke="#fff" /></Draw><Badge>1</Badge></button>
            <button aria-label="Расширение"><Draw s={12}><circle cx="8" cy="5" r="3" fill="#f0c030" /><circle cx="4" cy="9" r="3" fill="#d83030" /><circle cx="11" cy="9" r="4" fill="#eee" /><circle cx="12" cy="12" r="2" fill="#2858c8" /></Draw></button>
            <button aria-label="Почта"><Draw s={12}><path d="M2 5h12v10H2z" fill="#ddd" /><circle cx="9" cy="6" r="4.500" fill="#28b038" /><path d="M6.500 6l2 2 3.500-4" stroke="#fff" strokeWidth="1.500" /></Draw></button>
            <button aria-label="Ещё"><ChevronsRight size={14} /></button>
            <button aria-label="Меню"><Menu size={13} /></button>
          </NavIcons>
        </NavBar>
        <PageView>
          <Forum>
            <Post $h={30} $partial><PostButtons /></Post>
            <Post $h={200}>
              <PostHeader n={38} />
              <Quote />
              <PostButtons best />
            </Post>
            <Post $h={132}>
              <PostHeader n={39} />
              <PostButtons />
            </Post>
            <Pager aria-label="Страницы">
              <PagerCell href="#p" $w={130} $tone="blue">Страница 2 из 2</PagerCell>
              <PagerCell href="#p" $w={21}><b>«</b></PagerCell>
              <PagerCell href="#p" $w={45}>&lt; Ctrl</PagerCell>
              <PagerCell href="#p" $w={19}>1</PagerCell>
              <PagerCell href="#p" $w={20} $tone="grey">2</PagerCell>
              <PagerCell href="#p" $w={21} $tone="blue" aria-label="К странице"><Draw s={9} h={6} box="0 0 9 6"><path d="M0 0h9v1L5 5.500H4L0 1z" fill="#fff" /></Draw></PagerCell>
            </Pager>
            <Reply>
              <ReplyHead>
                <button aria-label="Свернуть форму"><Draw s={13}><path d="M0 0h16v16H0z" fill="#7f9fc8" /><circle cx="8" cy="8" r="6.500" fill="#e6ecf6" stroke="#446" /><path d="M5 8l3-3 3 3M5 12l3-3 3 3" stroke="#446" strokeWidth="1.500" /></Draw></button>
              </ReplyHead>
              <ReplyBody>
                <Editor>
                  <EditorTools>
                    <button aria-label="Меньше"><Draw s={7} box="0 0 8 8"><path d="M4 0l3 3H1zM4 4l3 3H1zM1 7h6" fill="#333" stroke="#333" strokeWidth=".5" /></Draw></button>
                    <button aria-label="Больше"><Draw s={7} box="0 0 8 8"><path d="M4 4L1 1h6zM4 8L1 5h6zM1 1h6" fill="#333" stroke="#333" strokeWidth=".5" /></Draw></button>
                  </EditorTools>
                  <EditorText aria-label="Сообщение" />
                </Editor>
              </ReplyBody>
            </Reply>
          </Forum>
          <PageScroll><ChevronUp size={8} strokeWidth={3} /><PageThumb /><ChevronDown size={8} strokeWidth={3} /></PageScroll>
        </PageView>
        <BottomBar>
          <BarGroup $w={138}>
            <button aria-label="Закрыть панель"><X size={11} strokeWidth={3} /></button>
            <button aria-label="Дополнения"><Puzzle size={12} fill="#ccc" /></button>
            <button aria-label="Настройки"><Settings size={12} /></button>
            <button aria-label="Вырезать"><Scissors size={11} /></button>
            <button aria-label="Копировать"><Copy size={11} /></button>
            <button aria-label="Вставить"><ClipboardList size={11} /></button>
            <button aria-label="Найти"><Search size={12} /></button>
          </BarGroup>
          <BarGroup $w={79} />
          {barIcons.map((g, i) => (
            <BarGroup key={i} $w={g.w} $line>
              {g.icons.map(([name, art]) => <button key={name} aria-label={name}>{art}</button>)}
            </BarGroup>
          ))}
          <Spacer />
          <BarGroup $w={64}>
            <button aria-label="Skype"><Draw s={11}><circle cx="8" cy="8" r="7.500" fill="#fff" /><path d="M11 5.500Q8 3 5.500 5T8 8t2.500 3T5 11" stroke="#1c3f88" strokeWidth="2.500" /></Draw></button>
            <button aria-label="Касание"><Draw s={12}><path d="M0 0h16v16H0z" fill="#a8a8a8" /><path d="M7 2v6l6 2v5H7l-3-4 3 1z" fill="#f4f4f4" /></Draw></button>
            <button aria-label="Капсула"><Draw s={11}><rect x="3.500" y="1" width="9" height="14" rx="4.500" fill="#eee" /><path d="M4 9h8q0 6-4 6t-4-6z" fill="#e87038" /></Draw></button>
          </BarGroup>
          <BarGroup $w={76} />
          <BarGroup $w={20}><button aria-label="Уменьшить"><Minus size={12} /></button></BarGroup>
          <BarGroup $w={28} $line>133%</BarGroup>
          <BarGroup $w={18} $line><button aria-label="Увеличить"><Plus size={12} /></button></BarGroup>
          <BarGroup $w={24}><span><sup>0</sup><sub>12</sub></span></BarGroup>
          <BarGroup $w={22}><button aria-label="Обновление"><Draw s={12}><path d="M0 0h16v16H0z" fill="#d8822c" /><path d="M11.500 5A4.500 4.500 0 1 0 12 10M12 3v4H8" stroke="#fff" strokeWidth="2" /></Draw></button></BarGroup>
        </BottomBar>
      </Browser>

      <IconColumn $indent={22}>
        {desktopRight.map((i) => <Shortcut key={i.label} href="#open" $row={i.row}>{i.art}{i.label}</Shortcut>)}
      </IconColumn>

      <VmShadow />
      <VmWindow>
        <VmTitle>
          <Draw s={11}><path d="M0 0h16v16H0z" fill="#2c5c94" /><path d="M2 2l5 3 6-3v7l-6 5-5-4z" fill="#a9d3f2" /><path d="M2 2l5 4v8M7 6l6-4" stroke="#fff" /></Draw>
          <h1>Win7x64 [Работает] - Oracle VM VirtualBox</h1>
          <Controls $w={28}>
            <button aria-label="Свернуть"><Minus size={10} strokeWidth={3} /></button>
            <button aria-label="Развернуть"><Square size={9} strokeWidth={3} /></button>
            <button aria-label="Закрыть"><X size={11} /></button>
          </Controls>
        </VmTitle>
        <VmMenu>
          {["Файл", "Машина", "Вид", "Ввод", "Устройства", "Справка"].map((m) => <a key={m} href="#vm">{m}</a>)}
        </VmMenu>
        <WordTitle>
          <QuickAccess>
            <button aria-label="Сохранить"><Save size={12} strokeWidth={2.500} /></button>
            <Row><button aria-label="Отменить"><Undo2 size={13} strokeWidth={3} /></button><Caret /></Row>
            <button aria-label="Повторить"><RotateCcw size={11} strokeWidth={3} /></button>
            <Row $gap={4}><i /><button aria-label="Настройка панели"><Draw s={7} box="0 0 7 7"><path d="M0 .5h7M.5 3h6L3.500 6z" stroke="#ddd" /></Draw></button></Row>
          </QuickAccess>
          <h2>gfcghfchgfchgfchg &nbsp;-&nbsp; Word</h2>
          <Row>
            <Spacer />
            <SignIn>Вход</SignIn>
            <Controls $w={31}>
              <button aria-label="Параметры ленты"><Draw s={9} h={8} box="0 0 9 8"><path d="M.5.5h8v7h-8zM.5 2.500h8M4.500 7V3.500M3 5l1.500-1.500L6 5" stroke="#ddd" /></Draw></button>
              <button aria-label="Свернуть документ"><Minus size={9} /></button>
              <button aria-label="Восстановить"><Draw s={7} box="0 0 7 7"><path d="M.5 2.500h4v4h-4zM2.500 2V.5h4v4H5" stroke="#ddd" /></Draw></button>
              <button aria-label="Закрыть документ"><X size={11} /></button>
            </Controls>
          </Row>
        </WordTitle>
        <RibbonTabs>
          {["Файл", "Главная", "Вставка", "Конструктор", "Макет", "Ссылки", "Рассылки", "Рецензирование", "Вид", "Справка"].map((t) => (
            <RibbonTab key={t} $active={t === "Главная"}>{t}</RibbonTab>
          ))}
          <TellMe><Lightbulb size={12} /><input aria-label="Помощник" placeholder="Что вы хотите сделать?" /></TellMe>
          <Share>
            <UserRound size={11} strokeWidth={1.500} />Поделиться
            <Pointer width="8" height="12" viewBox="0 0 8 12"><path d="M.5.5v9l2-2 1.500 4 1.500-.8L4 7h3z" fill="#fff" stroke="#555" strokeWidth=".5" /></Pointer>
          </Share>
        </RibbonTabs>
        <Ribbon>
          <Group $w={138}>
            <GroupBody $pad={6}>
              <Paste>
                <Draw s={22} box="0 0 22 22"><path d="M2 4h15v16H2z" fill="#e0b86a" /><path d="M6 2h7v4H6z" fill="#666" /><path d="M12 9h6l3 3v9h-9z" fill="#fff" stroke="#666" /><path d="M18 9v3h3" stroke="#888" /></Draw>
                Вставить
                <Caret />
              </Paste>
              <Stack $left={3}>
                <Command disabled><Scissors size={10} />Вырезать</Command>
                <Command disabled><Copy size={10} />Копировать</Command>
                <Command><Draw s={10}><path d="M10 1l5 4-5 5-4-4z" fill="#eee" /><path d="M6 6l4 4-4 5-6-4z" fill="#e0b86a" /></Draw>Формат по образцу</Command>
              </Stack>
            </GroupBody>
            <GroupLabel><h3>Буфер обмена</h3><Launcher /></GroupLabel>
          </Group>
          <Group $w={193}>
            <GroupBody $pad={4}>
              <ToolRows>
                <ToolRow>
                  <Picker $w={63}><select aria-label="Шрифт"><option>Calibri (Основной текст)</option></select><ChevronDown size={11} /></Picker>
                  <Picker $w={44}><select aria-label="Размер"><option>24</option></select><ChevronDown size={11} /></Picker>
                  <Tool aria-label="Крупнее">A<sup>ˆ</sup></Tool>
                  <Tool aria-label="Мельче">A<sup>ˇ</sup></Tool>
                  <Divider $w={5} />
                  <Tool $w={22}>Aa&nbsp;<Caret /></Tool>
                  <Divider $w={7} />
                  <Tool aria-label="Очистить формат"><Draw s={11}><path d="M6 10l6-7 4 4-6 7H7z" fill="#e07890" /><path d="M0 10L3 1l3 8M1 7h4" stroke="#bbb" strokeWidth="1.500" /></Draw></Tool>
                </ToolRow>
                <ToolRow>
                  <Tool $on aria-label="Полужирный"><b>Ж</b></Tool>
                  <Tool aria-label="Курсив"><b><em>К</em></b></Tool>
                  <Tool $w={13} aria-label="Подчёркнутый"><b><u>Ч</u></b></Tool>
                  <Tool $w={10} aria-label="Вид линии"><Caret /></Tool>
                  <Tool aria-label="Зачёркнутый"><SmallGlyph><s>abc</s></SmallGlyph></Tool>
                  <Tool aria-label="Подстрочный">x<sub>‚</sub></Tool>
                  <Tool $w={12} aria-label="Надстрочный">x<sup>²</sup></Tool>
                  <Divider $w={9} />
                  <Tool $w={21} aria-label="Эффекты"><Draw s={11}><path d="M2 14L7 2h2l5 12h-2.500L10 10.500H6L4.500 14zM7 8h2" stroke="#4a80c0" strokeWidth="1.500" /></Draw>&nbsp;<Caret /></Tool>
                  <Tool $w={24} aria-label="Выделение"><Draw s={12}><path d="M2 12h13v4H2z" fill="#ff0" /><path d="M2 5h3v5H2zM7 2v8h3V5H7M15 3l-4 8" stroke="#ddd" strokeWidth="1.300" /></Draw>&nbsp;<Caret /></Tool>
                  <Tool $w={23} aria-label="Цвет текста"><Draw s={12}><path d="M2 12h13v4H2z" fill="#e00" /><path d="M5 11l3.500-9L12 11M6 8h5" stroke="#ddd" strokeWidth="1.500" /></Draw>&nbsp;<Caret /></Tool>
                </ToolRow>
              </ToolRows>
            </GroupBody>
            <GroupLabel><h3>Шрифт</h3><Launcher /></GroupLabel>
          </Group>
          <Group $w={155}>
            <GroupBody $pad={4}>
              <ToolRows>
                <ToolRow>
                  {[0, 1, 2].map((k) => <Tool key={k} $w={23} aria-label={`Список ${k + 1}`}><ListArt kind={k} />&nbsp;<Caret /></Tool>)}
                  <Divider $w={4} />
                  <Tool aria-label="Уменьшить отступ"><IndentArt out /></Tool>
                  <Tool aria-label="Увеличить отступ"><IndentArt /></Tool>
                  <Divider $w={5} />
                  <Tool aria-label="Сортировка"><Draw s={11}><path d="M1 7l2.500-6L6 7M2 5h3" stroke="#4a90d9" strokeWidth="1.300" /><path d="M1 9h5l-5 6h5" stroke="#a060b8" strokeWidth="1.300" /><path d="M11 1v13M8 11l3 3 3-3" stroke="#ddd" strokeWidth="1.500" /></Draw></Tool>
                  <Divider $w={5} />
                  <Tool aria-label="Знаки"><Pilcrow size={11} /></Tool>
                </ToolRow>
                <ToolRow>
                  <Tool $on aria-label="По левому краю"><AlignArt d="M0 1.500h11M0 4.500h7M0 7.500h11M0 10.500h7" /></Tool>
                  <Tool aria-label="По центру"><AlignArt d="M0 1.500h11M2 4.500h7M0 7.500h11M2 10.500h7" /></Tool>
                  <Tool aria-label="По правому краю"><AlignArt d="M0 1.500h11M4 4.500h7M0 7.500h11M4 10.500h7" /></Tool>
                  <Tool aria-label="По ширине"><AlignArt d="M0 1.500h11M0 4.500h11M0 7.500h11M0 10.500h11" /></Tool>
                  <Divider $w={6} />
                  <Tool $w={21} aria-label="Интервал"><Draw s={11} box="0 0 11 11"><path d="M5 1.500h6M5 5.500h6M5 9.500h6" stroke="#ccc" /><path d="M2 1v9M0 3l2-2 2 2M0 8l2 2 2-2" stroke="#4a90d9" /></Draw>&nbsp;<Caret /></Tool>
                  <Divider $w={6} />
                  <Tool $w={22} aria-label="Заливка"><Draw s={12}><path d="M1 13h14v2H1z" stroke="#bbb" /><path d="M8 2l5 5-5 4-5-4z" fill="#eee" /><path d="M14 6q2 3 0 5-1-2 0-5z" fill="#4a90d9" /></Draw>&nbsp;<Caret /></Tool>
                  <Tool $w={22} aria-label="Границы"><Draw s={10}><path d="M0 0h16v16H0z" fill="#eee" /><path d="M8 1v14M1 8h14" stroke="#888" strokeDasharray="2 1" /></Draw>&nbsp;<Caret /></Tool>
                </ToolRow>
              </ToolRows>
            </GroupBody>
            <GroupLabel><h3>Абзац</h3><Launcher /></GroupLabel>
          </Group>
          <Group $w={313}>
            <GroupBody $pad={5}>
              <Gallery>
                {styleCards.map((c, i) => (
                  <StyleCard key={i} $on={c.on} $size={c.size} $tint={c.tint}><b>{c.sample}</b>{c.label}</StyleCard>
                ))}
                <GalleryScroll>
                  <button disabled aria-label="Вверх"><ChevronUp size={9} /></button>
                  <button aria-label="Вниз по стилям"><ChevronDown size={10} /></button>
                  <button aria-label="Все стили"><Draw s={9} box="0 0 9 9"><path d="M0 .5h9M1 4l3.500 3.500L8 4" stroke="#ddd" /></Draw></button>
                </GalleryScroll>
              </Gallery>
            </GroupBody>
            <GroupLabel><h3>Стили</h3><Launcher /></GroupLabel>
          </Group>
          <Group $w={71}>
            <GroupBody $pad={7}>
              <Stack>
                <Command><Draw s={10}><circle cx="10" cy="6" r="4.500" fill="#8cc4f4" stroke="#3c78c0" /><path d="M7 9l-5 6" stroke="#ddd" strokeWidth="2.500" /></Draw>Найти &nbsp;<Caret /></Command>
                <Command><Draw s={10}><path d="M1 2h4v5H1zM7 0v7h3V4H7M7 10H3v5h4M10 9v6h4v-4h-4" stroke="#b8a0d8" strokeWidth="1.500" /></Draw>Заменить</Command>
                <Command><Draw s={10}><path d="M5 1v12l3-3 2 5 2-1-2-4h4z" fill="#eee" /></Draw>Выделить<Caret /></Command>
              </Stack>
            </GroupBody>
            <GroupLabel><h3>Редактирование</h3></GroupLabel>
          </Group>
          <Group>
            <GroupBody $pad={0} />
            <GroupLabel><Spacer /><button aria-label="Свернуть ленту"><ChevronUp size={10} /></button></GroupLabel>
          </Group>
        </Ribbon>
        <DocArea>
          <Canvas><Paper><p>Превед</p></Paper></Canvas>
          <DocScroll>
            <button aria-label="Прокрутить вверх"><ChevronUp size={6} strokeWidth={4} /></button>
            <i />
            <button aria-label="Прокрутить вниз"><ChevronDown size={6} strokeWidth={4} /></button>
          </DocScroll>
        </DocArea>
        <WordStatus>
          <Row $gap={13}><span>Страница 1 из 1</span><span>Число слов: 1</span><BookOpen size={10} /><span>русский</span></Row>
          <Spacer />
          <ViewButton aria-label="Чтение"><BookOpen size={10} strokeWidth={2.500} /></ViewButton>
          <ViewButton $on aria-label="Разметка"><Draw s={10} box="0 0 10 10"><path d="M0 .5h10M1.500 3v4M8.500 3v4M1 3.500h8M1 6.500h8M0 9.500h10" stroke="#ccc" /></Draw></ViewButton>
          <ViewButton aria-label="Веб-документ"><Draw s={10} box="0 0 10 10"><path d="M4 8.500H.5v-8h8V4M2 2.500h5M2 4.500h3" stroke="#ccc" /><circle cx="7" cy="7" r="2.500" stroke="#ccc" /></Draw></ViewButton>
          <Row><span>&nbsp;−</span><Zoom type="range" aria-label="Масштаб" defaultValue={50} /><span>+</span></Row>
          <ZoomLevel>100 %</ZoomLevel>
        </WordStatus>
        <Taskbar>
          {tasks.map((t) => <TaskButton key={t.name} aria-label={t.name} $state={t.state}>{t.art}</TaskButton>)}
          <Tray>
            <span>RU</span>
            <Draw s={16} h={4} box="0 0 16 4"><path d="M5 4h6L8 1z" fill="#fff" /></Draw>
            <Draw s={10}><path d="M2 1v14M2 2h5v2h8v7H8V9H2" fill="#fff" stroke="#fff" /></Draw>
            <Draw s={10}><path d="M4 3h11v8H4zM7 14h6M1 1v13M0 4h3" stroke="#fff" strokeWidth="1.500" /></Draw>
            <Volume2 size={11} />
            <time dateTime="2020-02-22T00:12">0:12<br />22.02.2020</time>
            <ShowDesktop aria-label="Свернуть все окна" />
          </Tray>
        </Taskbar>
        <VmStatus>
          {vmIcons.map((icon, i) => <Draw key={i} s={12}>{icon}</Draw>)}
          <span>Right Ctrl</span>
          <Draw s={12} box="0 0 12 12"><path d="M3 11v-2M6 11V7M9 11V4" stroke="#aaa" strokeDasharray="2 1" strokeWidth="2" /></Draw>
        </VmStatus>
      </VmWindow>
    </Desktop>
  );
}
